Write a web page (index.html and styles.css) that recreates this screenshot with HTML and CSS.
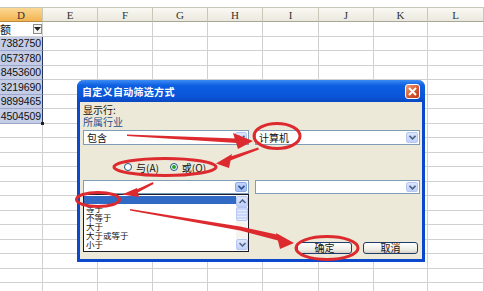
FILE: index.html
```
<!DOCTYPE html>
<html lang="zh-CN">
<head>
<meta charset="utf-8">
<title>自定义自动筛选方式</title>
<link rel="stylesheet" href="styles.css">
</head>
<body>
<div class="page">
  <div class="sheet">
    <div class="hd sel">D</div><div class="hd">E</div><div class="hd">F</div><div class="hd">G</div><div class="hd">H</div><div class="hd">I</div><div class="hd">J</div><div class="hd">K</div><div class="hd">L</div>

    <div class="cell cd head-cell"><span>额</span><span class="filter-btn"><svg width="7" height="4" viewBox="0 0 7 4"><path d="M0 0H7L3.5 4Z" fill="#222"/></svg></span></div><div class="cell"></div><div class="cell"></div><div class="cell"></div><div class="cell"></div><div class="cell"></div><div class="cell"></div><div class="cell"></div><div class="cell"></div>
    <div class="cell cd pick">7382750</div><div class="cell"></div><div class="cell"></div><div class="cell"></div><div class="cell"></div><div class="cell"></div><div class="cell"></div><div class="cell"></div><div class="cell"></div>
    <div class="cell cd pick">0573780</div><div class="cell"></div><div class="cell"></div><div class="cell"></div><div class="cell"></div><div class="cell"></div><div class="cell"></div><div class="cell"></div><div class="cell"></div>
    <div class="cell cd pick">8453600</div><div class="cell"></div><div class="cell"></div><div class="cell"></div><div class="cell"></div><div class="cell"></div><div class="cell"></div><div class="cell"></div><div class="cell"></div>
    <div class="cell cd pick">3219690</div><div class="cell"></div><div class="cell"></div><div class="cell"></div><div class="cell"></div><div class="cell"></div><div class="cell"></div><div class="cell"></div><div class="cell"></div>
    <div class="cell cd pick">9899465</div><div class="cell"></div><div class="cell"></div><div class="cell"></div><div class="cell"></div><div class="cell"></div><div class="cell"></div><div class="cell"></div><div class="cell"></div>
    <div class="cell cd pick last">4504509</div><div class="cell"></div><div class="cell"></div><div class="cell"></div><div class="cell"></div><div class="cell"></div><div class="cell"></div><div class="cell"></div><div class="cell"></div>
    <div class="cell"></div><div class="cell"></div><div class="cell"></div><div class="cell"></div><div class="cell"></div><div class="cell"></div><div class="cell"></div><div class="cell"></div><div class="cell"></div>
    <div class="cell"></div><div class="cell"></div><div class="cell"></div><div class="cell"></div><div class="cell"></div><div class="cell"></div><div class="cell"></div><div class="cell"></div><div class="cell"></div>
    <div class="cell"></div><div class="cell"></div><div class="cell"></div><div class="cell"></div><div class="cell"></div><div class="cell"></div><div class="cell"></div><div class="cell"></div><div class="cell"></div>
    <div class="cell"></div><div class="cell"></div><div class="cell"></div><div class="cell"></div><div class="cell"></div><div class="cell"></div><div class="cell"></div><div class="cell"></div><div class="cell"></div>
    <div class="cell"></div><div class="cell"></div><div class="cell"></div><div class="cell"></div><div class="cell"></div><div class="cell"></div><div class="cell"></div><div class="cell"></div><div class="cell"></div>
    <div class="cell"></div><div class="cell"></div><div class="cell"></div><div class="cell"></div><div class="cell"></div><div class="cell"></div><div class="cell"></div><div class="cell"></div><div class="cell"></div>
    <div class="cell"></div><div class="cell"></div><div class="cell"></div><div class="cell"></div><div class="cell"></div><div class="cell"></div><div class="cell"></div><div class="cell"></div><div class="cell"></div>
    <div class="cell"></div><div class="cell"></div><div class="cell"></div><div class="cell"></div><div class="cell"></div><div class="cell"></div><div class="cell"></div><div class="cell"></div><div class="cell"></div>
    <div class="cell"></div><div class="cell"></div><div class="cell"></div><div class="cell"></div><div class="cell"></div><div class="cell"></div><div class="cell"></div><div class="cell"></div><div class="cell"></div>
    <div class="cell"></div><div class="cell"></div><div class="cell"></div><div class="cell"></div><div class="cell"></div><div class="cell"></div><div class="cell"></div><div class="cell"></div><div class="cell"></div>
    <div class="cell"></div><div class="cell"></div><div class="cell"></div><div class="cell"></div><div class="cell"></div><div class="cell"></div><div class="cell"></div><div class="cell"></div><div class="cell"></div>
    <div class="cell"></div><div class="cell"></div><div class="cell"></div><div class="cell"></div><div class="cell"></div><div class="cell"></div><div class="cell"></div><div class="cell"></div><div class="cell"></div>
  </div>

  <div class="dialog">
    <div class="titlebar">
      <span class="title">自定义自动筛选方式</span>
      <span class="close"><svg width="9" height="9" viewBox="0 0 9 9"><path d="M1 1L8 8M8 1L1 8" stroke="#fff" stroke-width="2"/></svg></span>
    </div>
    <div class="body">
      <div class="label">显示行:</div>
      <div class="label field">所属行业</div>
      <div class="combo-row first">
        <div class="combo"><span class="combo-text">包含</span><span class="drop"><svg width="7" height="5" viewBox="0 0 7 5"><path d="M0.5 0.8L3.5 3.8L6.5 0.8" fill="none" stroke="#4d6185" stroke-width="1.6"/></svg></span></div>
        <div class="combo"><span class="combo-text">计算机</span><span class="drop"><svg width="7" height="5" viewBox="0 0 7 5"><path d="M0.5 0.8L3.5 3.8L6.5 0.8" fill="none" stroke="#4d6185" stroke-width="1.6"/></svg></span></div>
      </div>
      <div class="radio-row">
        <span class="radio"><span class="dot"></span>与(A)</span>
        <span class="radio"><span class="dot on"></span>或(O)</span>
      </div>
      <div class="combo-row second">
        <div class="combo-wrap">
          <div class="combo"><span class="combo-text"></span><span class="drop hot"><svg width="7" height="5" viewBox="0 0 7 5"><path d="M0.5 0.8L3.5 3.8L6.5 0.8" fill="none" stroke="#2f4f8f" stroke-width="1.6"/></svg></span></div>
          <div class="listbox">
            <div class="items">
              <div class="item hl">&nbsp;</div>
              <div class="item">等于</div>
              <div class="item">不等于</div>
              <div class="item">大于</div>
              <div class="item">大于或等于</div>
              <div class="item">小于</div>
            </div>
            <div class="vscroll">
              <span class="sb-btn"><svg width="7" height="5" viewBox="0 0 7 5"><path d="M0.5 4L3.5 1L6.5 4" fill="none" stroke="#4d6185" stroke-width="1.5"/></svg></span>
              <span class="sb-thumb"></span>
              <span class="sb-track"></span>
              <span class="sb-btn"><svg width="7" height="5" viewBox="0 0 7 5"><path d="M0.5 1L3.5 4L6.5 1" fill="none" stroke="#4d6185" stroke-width="1.5"/></svg></span>
            </div>
          </div>
        </div>
        <div class="combo"><span class="combo-text"></span><span class="drop"><svg width="7" height="5" viewBox="0 0 7 5"><path d="M0.5 0.8L3.5 3.8L6.5 0.8" fill="none" stroke="#4d6185" stroke-width="1.6"/></svg></span></div>
      </div>
      <div class="buttons">
        <span class="btn">确定</span>
        <span class="btn">取消</span>
      </div>
    </div>
  </div>

  <svg class="marks" width="484" height="291" viewBox="0 0 484 291">
    <g fill="none" stroke="#dc2a2e" stroke-width="3">
      <ellipse cx="277" cy="136" rx="23" ry="12.5"/>
      <ellipse cx="165" cy="167" rx="51" ry="8.5"/>
      <ellipse cx="98" cy="199.5" rx="21.5" ry="7"/>
      <ellipse cx="327" cy="248" rx="31" ry="11.5"/>
    </g>
    <g fill="#dc2a2e">
      <polygon points="127,134.5 237,138.5 237,143 127,136"/>
      <polygon points="233,133 238,149 253,141"/>
      <polygon points="258,147.5 259,149.5 229,161 227.5,157.5"/>
      <polygon points="232,154 229,168 216,163.5"/>
      <polygon points="153,182 153.5,184 136,193.5 134.5,190.5"/>
      <polygon points="137,188 139,197 122,194.5"/>
      <polygon points="130,209 240,226.5 279,235 278,240.5 240,230.5 130,210.5"/>
      <polygon points="276,233 280,249 294,243"/>
    </g>
  </svg>
</div>
</body>
</html>
```
FILE: styles.css
```
html, body {
  margin: 0;
  padding: 0;
  background: #fff;
  overflow: hidden;
}
.page {
  position: relative;
  width: 484px;
  height: 291px;
  overflow: hidden;
  padding-top: 7px;
  box-sizing: border-box;
  font-family: "Liberation Sans", "Noto Sans CJK SC", sans-serif;
}
.sheet {
  display: grid;
  grid-template-columns: 43px 55px 55px 55px 55px 56px 55px 54px 56px;
  grid-template-rows: 15px;
  grid-auto-rows: 14.5px;
}
.hd {
  box-sizing: border-box;
  border-top: 1px solid #c9c7b8;
  border-right: 1px solid #c9c7b8;
  border-bottom: 1px solid #a8a696;
  background: linear-gradient(#f9f8f3, #ebe9de);
  font: 11px "Liberation Serif", serif;
  color: #333;
  display: flex;
  align-items: center;
  justify-content: center;
}
.hd.sel {
  background: linear-gradient(#fcd893, #f3b451);
  border-bottom-color: #b98a3a;
}
.cell {
  box-sizing: border-box;
  border-right: 1px solid #d0d0d0;
  border-bottom: 1px solid #d0d0d0;
}
.cd {
  display: flex;
  align-items: center;
  justify-content: flex-end;
  overflow: hidden;
  white-space: nowrap;
  font-size: 10.5px;
  letter-spacing: -0.1px;
  color: #111;
  padding-right: 1px;
}
.head-cell {
  justify-content: space-between;
  font-family: "Noto Sans CJK SC", sans-serif;
  font-size: 11px;
  padding-right: 0;
}
.filter-btn {
  width: 9px;
  height: 10px;
  box-sizing: border-box;
  border: 1px solid #8c8c8c;
  background: #f4f4f0;
  display: flex;
  align-items: center;
  justify-content: center;
}
.pick {
  background: #c4cce6;
  border-right-color: #2e3358;
  border-bottom-color: #9ba6cb;
}
.last {
  position: relative;
  overflow: visible;
}
.last::after {
  content: "";
  position: absolute;
  right: -2px;
  bottom: -2px;
  width: 3px;
  height: 3px;
  background: #222;
}

.dialog {
  position: absolute;
  left: 77px;
  top: 80px;
  width: 348px;
  height: 182px;
  box-sizing: border-box;
  border: 3px solid #0c48cc;
  border-top: 0;
  border-radius: 7px 7px 0 0;
  background: #ece9d8;
  display: flex;
  flex-direction: column;
  font-family: "Noto Sans CJK SC", sans-serif;
  color: #111;
}
.titlebar {
  height: 22px;
  margin: 0 -3px;
  padding: 0 5px 0 5px;
  border-radius: 7px 7px 0 0;
  background: linear-gradient(#3d8cf4, #0e5fe2 25%, #0955d8 75%, #0a48c2);
  display: flex;
  align-items: center;
  justify-content: space-between;
}
.title {
  color: #fff;
  font-size: 10px;
  font-weight: bold;
  letter-spacing: 0.3px;
}
.close {
  width: 15px;
  height: 15px;
  box-sizing: border-box;
  border: 1px solid #fff;
  border-radius: 3px;
  background: linear-gradient(135deg, #eea07c, #d2532f 60%, #b83c20);
  display: flex;
  align-items: center;
  justify-content: center;
}
.body {
  position: relative;
  flex: 1;
  padding: 2px 2px 0 3px;
  display: flex;
  flex-direction: column;
}
.label {
  font-size: 10px;
  line-height: 12px;
  height: 12px;
}
.field {
  color: #24508f;
}
.combo-row {
  display: flex;
  justify-content: space-between;
}
.combo-row.first {
  margin-top: 2px;
}
.combo-row.second {
  margin-top: 6px;
}
.combo {
  width: 165px;
  height: 15px;
  box-sizing: border-box;
  border: 1px solid #7f9db9;
  background: #fff;
  display: flex;
  align-items: center;
  justify-content: space-between;
  padding: 1px;
}
.combo-row.first .combo:first-child {
  width: 166px;
}
.combo-wrap {
  position: relative;
  width: 166px;
}
.combo-wrap .combo {
  width: 166px;
  height: 14px;
}
.combo-row.second > .combo {
  height: 14px;
}
.combo-text {
  font-size: 10px;
  padding-left: 2px;
  line-height: 12px;
}
.drop {
  width: 12px;
  height: 100%;
  box-sizing: border-box;
  border: 1px solid #b6c8f2;
  border-radius: 2px;
  background: linear-gradient(#dce6fd, #c0d1fa);
  display: flex;
  align-items: center;
  justify-content: center;
}
.drop.hot {
  background: linear-gradient(#c3d4fb, #a2bcf2);
  border-color: #8eaae6;
}
.radio-row {
  margin-top: 15px;
  height: 14px;
  padding-left: 41px;
  display: flex;
  align-items: center;
  gap: 11px;
  font-size: 10px;
}
.radio {
  display: flex;
  align-items: center;
  gap: 4px;
}
.dot {
  width: 8px;
  height: 8px;
  box-sizing: border-box;
  border: 1px solid #1c5180;
  border-radius: 50%;
  background: #fff;
  display: flex;
  align-items: center;
  justify-content: center;
}
.dot.on::after {
  content: "";
  width: 4px;
  height: 4px;
  border-radius: 50%;
  background: #27a327;
}
.listbox {
  position: absolute;
  left: 0;
  top: 14px;
  width: 166px;
  height: 58px;
  box-sizing: border-box;
  border: 1px solid #1b1b2a;
  background: #fff;
  display: flex;
  z-index: 2;
}
.items {
  flex: 1;
  padding-top: 1px;
  overflow: hidden;
}
.item {
  font-size: 8.5px;
  line-height: 9px;
  height: 9px;
  padding-left: 2px;
  white-space: nowrap;
}
.item.hl {
  background: #316ac5;
  color: #fff;
  height: 8px;
}
.vscroll {
  width: 12px;
  display: flex;
  flex-direction: column;
  background: #f5f4ee;
  padding: 1px 0;
  box-sizing: border-box;
}
.sb-btn {
  height: 11px;
  box-sizing: border-box;
  border: 1px solid #b6c8f2;
  border-radius: 2px;
  background: linear-gradient(#dce6fd, #c0d1fa);
  display: flex;
  align-items: center;
  justify-content: center;
}
.sb-thumb {
  height: 14px;
  box-sizing: border-box;
  border: 1px solid #b6c8f2;
  border-radius: 2px;
  background: repeating-linear-gradient(#c8d7fb 0 2px, #e4ecfe 2px 3px);
}
.sb-track {
  flex: 1;
}
.buttons {
  margin-top: 48px;
  padding-right: 2px;
  display: flex;
  justify-content: flex-end;
  gap: 11px;
}
.btn {
  width: 55px;
  height: 12px;
  box-sizing: border-box;
  border: 1px solid #1f3b6e;
  border-radius: 3px;
  background: linear-gradient(#ffffff, #ecebe3 70%, #d6d0c5);
  font-size: 10px;
  line-height: 10px;
  display: flex;
  align-items: center;
  justify-content: center;
}
.marks {
  position: absolute;
  left: 0;
  top: 0;
  pointer-events: none;
  z-index: 5;
}
```
